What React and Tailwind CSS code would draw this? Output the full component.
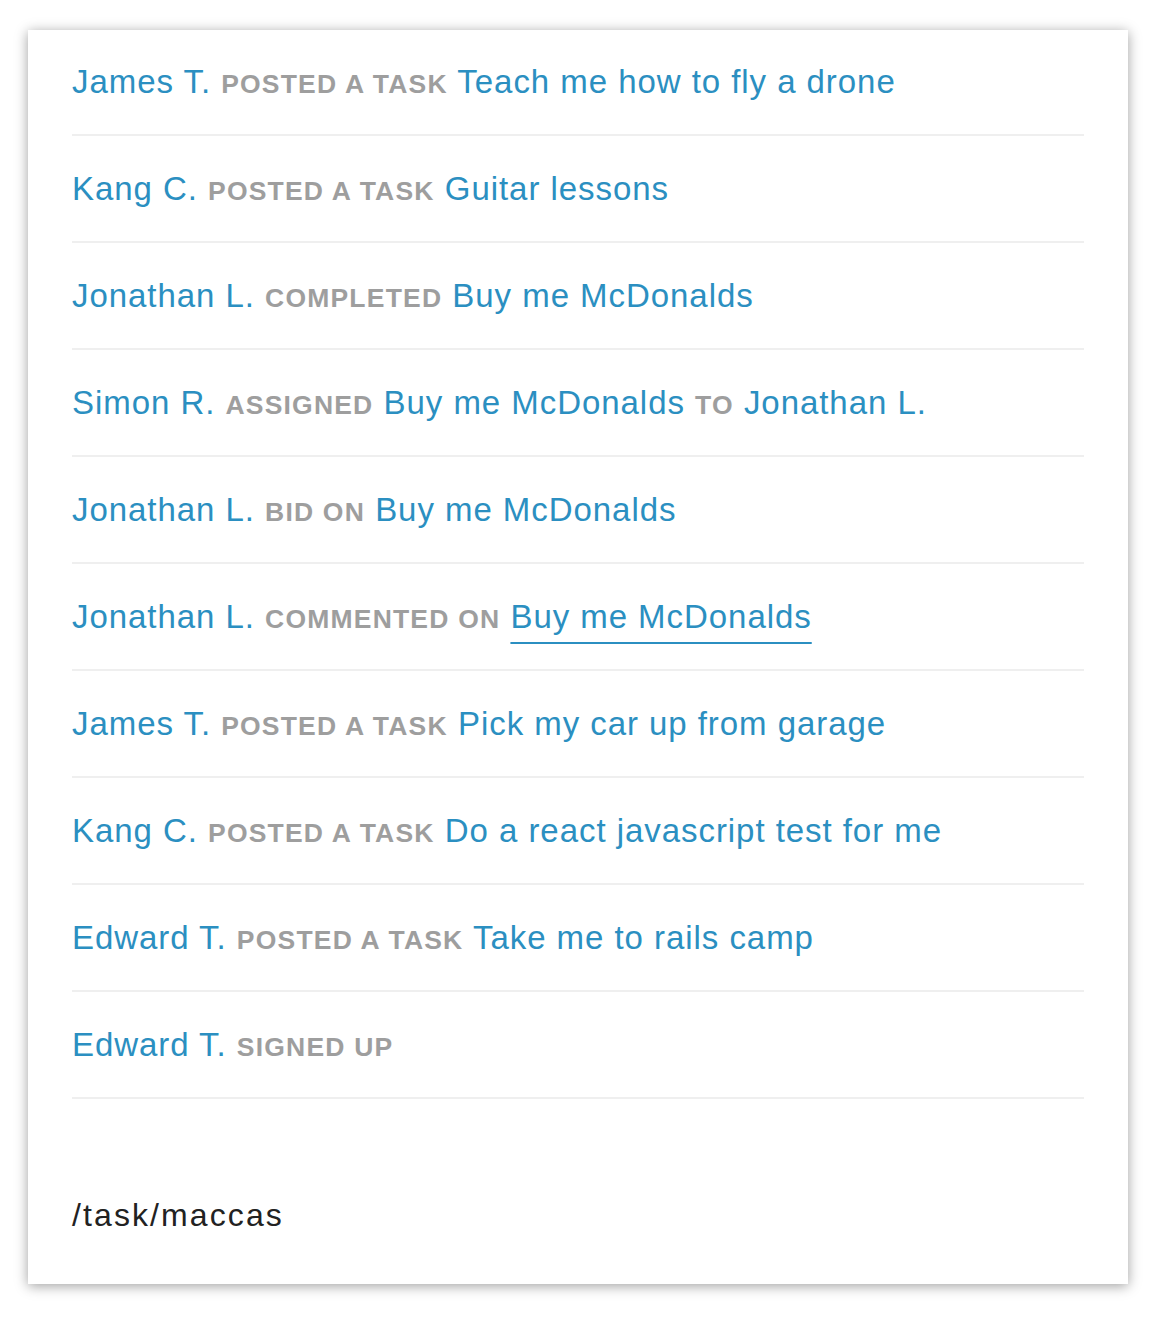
const feed = [
  { user: 'James T.', verb: 'posted a task', task: 'Teach me how to fly a drone' },
  { user: 'Kang C.', verb: 'posted a task', task: 'Guitar lessons' },
  { user: 'Jonathan L.', verb: 'completed', task: 'Buy me McDonalds' },
  { user: 'Simon R.', verb: 'assigned', task: 'Buy me McDonalds', to: 'Jonathan L.' },
  { user: 'Jonathan L.', verb: 'bid on', task: 'Buy me McDonalds' },
  { user: 'Jonathan L.', verb: 'commented on', task: 'Buy me McDonalds', hover: true },
  { user: 'James T.', verb: 'posted a task', task: 'Pick my car up from garage' },
  { user: 'Kang C.', verb: 'posted a task', task: 'Do a react javascript test for me' },
  { user: 'Edward T.', verb: 'posted a task', task: 'Take me to rails camp' },
  { user: 'Edward T.', verb: 'signed up' },
]

function Verb({ children }) {
  return (
    <span className="text-[26.5px] leading-none tracking-[1.2px] font-bold uppercase text-[#9e9e9e]">
      {children}
    </span>
  )
}

function Link({ children, hover }) {
  return (
    <a
      className={
        hover
          ? 'text-[#2b8fc1] underline decoration-2 underline-offset-[14px] decoration-[#2b8fc1]'
          : 'text-[#2b8fc1]'
      }
    >
      {children}
    </a>
  )
}

export default function App() {
  return (
    <div className="min-h-[1318px] bg-white pt-[30px] pl-[28px]">
      <div className="w-[1100px] h-[1254px] bg-white shadow-[0_2px_12px_rgba(0,0,0,0.38)] px-[44px] flex flex-col" style={{ fontFamily: '"Liberation Sans", Arial, sans-serif' }}>
        <ul>
          {feed.map((item, i) => (
            <li key={i} className="pt-[29px] first:pt-[28px] pb-[28px] border-b-2 border-[#efefef] text-[33px] tracking-[0.95px] leading-[48px] whitespace-nowrap">
              <Link>{item.user}</Link> <Verb>{item.verb}</Verb>
              {item.task && (
                <>
                  {' '}
                  <Link hover={item.hover}>{item.task}</Link>
                </>
              )}
              {item.to && (
                <>
                  {' '}
                  <Verb>to</Verb> <Link>{item.to}</Link>
                </>
              )}
            </li>
          ))}
        </ul>
        <div className="mt-[92px] text-[32px] tracking-[2.1px] leading-[48px] text-[#222]">/task/maccas</div>
      </div>
    </div>
  )
}
